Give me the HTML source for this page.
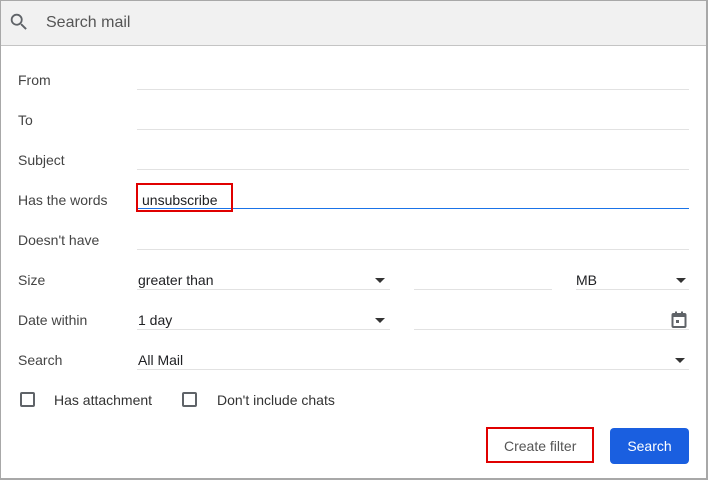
<!DOCTYPE html>
<html><head><meta charset="utf-8"><style>
*{margin:0;padding:0;box-sizing:border-box}
body{width:708px;height:480px;background:#fff;font-family:"Liberation Sans",Arial,sans-serif;position:relative;overflow:hidden;color:#222}
.frame{position:absolute;left:0;top:0;width:708px;height:480px;border:1px solid #a8a8a8;border-width:1px 2px 2px 1px}
.hdr{position:absolute;left:1px;top:1px;width:705px;height:45px;background:#f1f1f1;border-bottom:1px solid #c4c4c4}
.hdr span{position:absolute;left:45px;top:13px;font-size:16px;color:#555}
.lbl{position:absolute;left:18px;font-size:14px;color:#444}
.line{position:absolute;height:1px;background:#e2e2e2}
.val{position:absolute;font-size:14px;color:#202124}
.arr{position:absolute;width:0;height:0;border-left:5px solid transparent;border-right:5px solid transparent;border-top:5px solid #333}
.cb{position:absolute;width:15px;height:15px;border:2px solid #5f6368;border-radius:2px}
</style></head><body>
<div class="hdr">
<svg style="position:absolute;left:7px;top:10px" width="22" height="22" viewBox="0 0 24 24"><path fill="#5f6368" d="M15.5 14h-.79l-.28-.27A6.47 6.47 0 0 0 16 9.5 6.5 6.5 0 1 0 9.5 16c1.61 0 3.09-.59 4.23-1.57l.27.28v.79l5 4.99L20.49 19l-4.99-5zm-6 0C7.01 14 5 11.990 5 9.5S7.01 5 9.5 5 14 7.01 14 9.5 11.99 14 9.5 14z"/></svg>
<span>Search mail</span></div>

<div class="lbl" style="top:72px">From</div><div class="line" style="left:137px;top:89px;width:552px"></div>
<div class="lbl" style="top:112px">To</div><div class="line" style="left:137px;top:129px;width:552px"></div>
<div class="lbl" style="top:152px">Subject</div><div class="line" style="left:137px;top:169px;width:552px"></div>
<div class="lbl" style="top:192px">Has the words</div><div class="line" style="left:137px;top:208px;width:552px;background:#1a73e8;height:1px"></div>
<div class="val" style="left:142px;top:192px">unsubscribe</div>
<div style="position:absolute;left:136px;top:183px;width:97px;height:29px;border:2px solid #e00000"></div>
<div class="lbl" style="top:232px">Doesn't have</div><div class="line" style="left:137px;top:249px;width:552px"></div>

<div class="lbl" style="top:272px">Size</div>
<div class="val" style="left:138px;top:272px">greater than</div><div class="arr" style="left:375px;top:278px"></div>
<div class="line" style="left:137px;top:289px;width:253px"></div>
<div class="line" style="left:414px;top:289px;width:138px"></div>
<div class="val" style="left:576px;top:272px">MB</div><div class="arr" style="left:676px;top:278px"></div>
<div class="line" style="left:576px;top:289px;width:113px"></div>

<div class="lbl" style="top:312px">Date within</div>
<div class="val" style="left:138px;top:312px">1 day</div><div class="arr" style="left:375px;top:318px"></div>
<div class="line" style="left:137px;top:329px;width:253px"></div>
<div class="line" style="left:414px;top:329px;width:275px"></div>
<svg style="position:absolute;left:671px;top:311px" width="16" height="17" viewBox="0 0 16 17"><rect x="1.5" y="3" width="13" height="13" rx="1" fill="none" stroke="#5f6368" stroke-width="2"/><rect x="1.5" y="3" width="13" height="3" fill="#5f6368"/><rect x="4" y="0.5" width="2" height="3" fill="#5f6368"/><rect x="10" y="0.5" width="2" height="3" fill="#5f6368"/><rect x="5" y="9" width="3" height="3" fill="#5f6368"/></svg>

<div class="lbl" style="top:352px">Search</div>
<div class="val" style="left:138px;top:352px">All Mail</div><div class="arr" style="left:675px;top:358px"></div>
<div class="line" style="left:137px;top:369px;width:552px"></div>

<div class="cb" style="left:20px;top:392px"></div>
<div class="val" style="left:54px;top:392px;color:#333">Has attachment</div>
<div class="cb" style="left:182px;top:392px"></div>
<div class="val" style="left:217px;top:392px;color:#333">Don't include chats</div>

<div style="position:absolute;left:486px;top:427px;width:108px;height:36px;border:2px solid #e00000"></div>
<div class="val" style="left:504px;top:438px;color:#555">Create filter</div>
<div style="position:absolute;left:610px;top:428px;width:79px;height:36px;background:#1a5fe0;border-radius:4px;color:#fff;font-size:14px;text-align:center;line-height:36px">Search</div>
<div class="frame"></div>
</body></html>
